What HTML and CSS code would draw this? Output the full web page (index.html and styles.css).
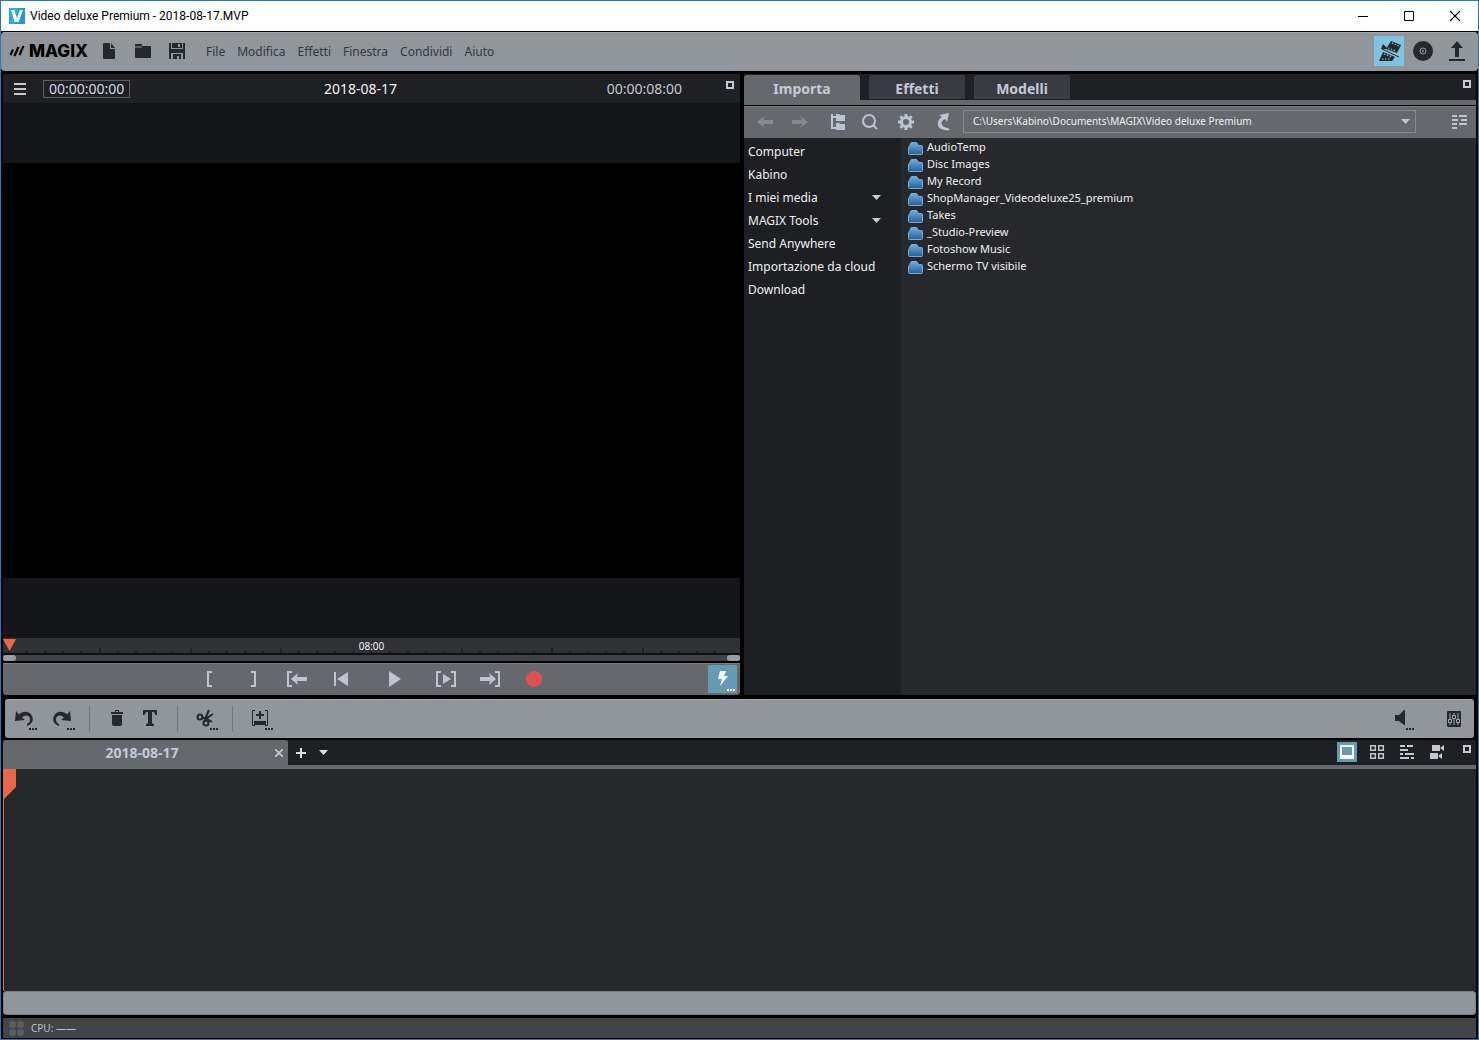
FILE: index.html
```html
<!DOCTYPE html>
<html lang="it">
<head>
<meta charset="utf-8">
<title>Video deluxe Premium - 2018-08-17.MVP</title>
<link rel="stylesheet" href="styles.css">
</head>
<body>
<div class="window">
  <header class="titlebar">
    <svg class="app-icon" width="16" height="16" viewBox="0 0 16 16"><rect width="16" height="16" fill="#27aae8"/><path d="M10 0H16V16H5Z" fill="#1d9add"/><path d="M2 2h3.400l2.400 8 3-8H14L9.500 14H5.500Z" fill="#fff"/></svg>
    <h1 class="title">Video deluxe Premium - 2018-08-17.MVP</h1>
    <div class="window-buttons">
      <button aria-label="Riduci"><svg width="12" height="12" viewBox="0 0 12 12"><path d="M1 6.500h10" stroke="#000"/></svg></button>
      <button aria-label="Ingrandisci"><svg width="12" height="12" viewBox="0 0 12 12"><path d="M1.500 1.500h9v9h-9z" stroke="#000" fill="none"/></svg></button>
      <button aria-label="Chiudi"><svg width="12" height="12" viewBox="0 0 12 12"><path d="M1 1l10 10M11 1L1 11" stroke="#000" stroke-width="1.100"/></svg></button>
    </div>
  </header>

  <div class="menubar">
    <div class="brand">
      <svg width="16" height="12" viewBox="0 0 16 12"><path d="M1.500 10L4 4.500M5.500 11L9.500 2M10.500 10L14.500 1" stroke="#000" stroke-width="2.200" fill="none"/></svg>
      <span class="brand-name">MAGIX</span>
    </div>
    <div class="file-buttons">
      <button aria-label="Nuovo"><svg width="20" height="20" viewBox="0 0 20 20"><path d="M5 2h6v6h5v9q0 1-1 1H5q-1 0-1-1V3q0-1 1-1zM12 2l4 5h-4z" fill="#27282b"/></svg></button>
      <button aria-label="Apri"><svg width="20" height="20" viewBox="0 0 20 20"><path d="M2 4q0-1 1-1h5q1 0 1 1v1h8q1 0 1 1v10q0 1-1 1H3q-1 0-1-1z" fill="#27282b"/><path d="M2 6h7" stroke="#91959c"/></svg></button>
      <button aria-label="Salva"><svg width="20" height="20" viewBox="0 0 20 20"><path d="M2 2h2v6h12V2h2v16h-2v-6H4v6H2zM5 2h10v5H5z" fill="#27282b"/><path d="M11 3h2v3h-2z" fill="#91959c"/><path d="M6 13h8v5h-2v-3h-2v3H6z" fill="#27282b"/></svg></button>
    </div>
    <nav class="menus">
      <button>File</button><button>Modifica</button><button>Effetti</button><button>Finestra</button><button>Condividi</button><button>Aiuto</button>
    </nav>
    <div class="modes">
      <button class="mode-active" aria-label="Modifica video"><svg width="30" height="30" viewBox="0 0 30 30" fill="#27282b"><path d="M17 5l10 4-4 8-11-4z"/><path d="M9 16l12 5-3 4H5z"/><path d="M8 13l17 8" stroke="#27282b" stroke-width="1"/><path d="M9 8l5 5H7z"/><path d="M18 7l7 3M14 12l8 3M10 18l8 3M8 23l9 0" stroke="#7fc3e0" stroke-width="1.200" stroke-dasharray="1.500 1.500"/></svg></button>
      <button aria-label="Masterizza"><svg width="24" height="24" viewBox="0 0 24 24"><circle cx="12" cy="12" r="10" fill="#27282b"/><circle cx="12" cy="12" r="3" fill="none" stroke="#91959c"/><circle cx="12" cy="12" r="1" fill="#91959c"/></svg></button>
      <button aria-label="Esporta"><svg width="24" height="24" viewBox="0 0 24 24"><path d="M12 2l6 7h-4v9h-4V9H6zM4 20h16v2H4z" fill="#27282b"/></svg></button>
    </div>
  </div>

  <main class="workspace">
    <section class="monitor">
      <div class="monitor-head">
        <div class="head-left">
          <button aria-label="Menu"><svg width="14" height="14" viewBox="0 0 14 14"><path d="M1 2h12M1 7h12M1 12h12" stroke="#c4c8d0" stroke-width="2"/></svg></button>
          <span class="timecode">00:00:00:00</span>
        </div>
        <h2 class="project">2018-08-17</h2>
        <div class="head-right">
          <span class="duration">00:00:08:00</span>
          <button class="maximize" aria-label="Ingrandisci monitor"><svg width="8" height="8" viewBox="0 0 8 8"><path d="M1 1h6v6H1z" fill="none" stroke="#c4c8d0" stroke-width="2"/></svg></button>
        </div>
      </div>
      <div class="preview"><div class="video"></div></div>
      <div class="ruler">
        <svg class="ticks" viewBox="0 0 737 15" preserveAspectRatio="none"><path d="M6 13v2M24 13v2M42 13v2M60 13v2M78 13v2M97 10v5M115 13v2M133 13v2M151 13v2M169 13v2M188 10v5M206 13v2M224 13v2M242 13v2M260 13v2M278 10v5M296 13v2M314 13v2M332 13v2M350 13v2M368 13v2M387 13v2M405 13v2M423 13v2M441 13v2M459 10v5M477 13v2M495 13v2M513 13v2M531 13v2M549 10v5M567 13v2M585 13v2M603 13v2M621 13v2M640 10v5M658 13v2M676 13v2M694 13v2M712 13v2" stroke="#101114"/></svg>
        <svg class="marker" width="13" height="12" viewBox="0 0 13 12"><path d="M0 0h13L6.500 12z" fill="#ea6847"/></svg>
        <span>08:00</span>
      </div>
      <div class="scrub"><i></i><i></i></div>
      <div class="transport">
        <div class="transport-keys">
          <button aria-label="Inizio"><svg width="24" height="20" viewBox="0 0 24 20"><path d="M15 3h-4v14h4" class="line"/></svg></button>
          <button aria-label="Fine"><svg width="24" height="20" viewBox="0 0 24 20"><path d="M10 3h4v14h-4" class="line"/></svg></button>
          <button aria-label="Vai a inizio"><svg width="24" height="20" viewBox="0 0 24 20"><path d="M7 3H3v14h4" class="line"/><path d="M6 10l7-6-1 4h10v4H12l1 4z" class="fill"/></svg></button>
          <button aria-label="Indietro"><svg width="24" height="20" viewBox="0 0 24 20"><path d="M5 3h2v14H5zM19 3v14L8 10z" class="fill"/></svg></button>
          <button class="play" aria-label="Riproduci"><svg width="24" height="20" viewBox="0 0 24 20"><path d="M7 2l12 8-12 8z" class="fill"/></svg></button>
          <button aria-label="Riproduci area"><svg width="24" height="20" viewBox="0 0 24 20"><path d="M7 3H3v14h4M17 3h4v14h-4" class="line"/><path d="M9 5l8 5-8 5z" class="fill"/></svg></button>
          <button aria-label="Vai a fine"><svg width="24" height="20" viewBox="0 0 24 20"><path d="M17 3h4v14h-4" class="line"/><path d="M18 10l-7-6 1 4H2v4h10l-1 4z" class="fill"/></svg></button>
          <button aria-label="Registra"><svg width="24" height="20" viewBox="0 0 24 20"><circle cx="12" cy="10" r="8" fill="#df5050"/></svg></button>
        </div>
        <button class="boost" aria-label="Prestazioni"><svg width="29" height="28" viewBox="0 0 29 28" fill="#fff"><path d="M12 6h6l-2 5h4l-8 10 2-7h-4zM19 24h2v2h-2zM22 24h2v2h-2zM25 24h2v2h-2z"/></svg></button>
      </div>
    </section>

    <section class="media">
      <div class="tabs">
        <button class="tab tab-active">Importa</button>
        <button class="tab">Effetti</button>
        <button class="tab">Modelli</button>
        <button class="maximize" aria-label="Ingrandisci media"><svg width="8" height="8" viewBox="0 0 8 8"><path d="M1 1h6v6H1z" fill="none" stroke="#c4c8d0" stroke-width="2"/></svg></button>
      </div>
      <div class="browser-bar">
        <button aria-label="Indietro"><svg width="24" height="24" viewBox="0 0 24 24"><path d="M4 12l8-6-2 4h10v4H10l2 4z" fill="#85888d"/></svg></button>
        <button aria-label="Avanti"><svg width="24" height="24" viewBox="0 0 24 24"><path d="M20 12l-8-6 2 4H4v4h10l-2 4z" fill="#85888d"/></svg></button>
        <button aria-label="Struttura"><svg width="24" height="24" viewBox="0 0 24 24"><path d="M9 4v14h5M9 7h5" class="line"/><path d="M13 4h3l1 1h5v6h-9zM13 13h3l1 1h5v6h-9z" class="fill"/></svg></button>
        <button aria-label="Cerca"><svg width="24" height="24" viewBox="0 0 24 24"><circle cx="11" cy="11" r="6" class="line"/><path d="M15 15l4 4" class="line"/></svg></button>
        <button aria-label="Impostazioni"><svg width="24" height="24" viewBox="0 0 24 24"><circle cx="13" cy="12" r="4.500" fill="none" stroke="#bfc3d0" stroke-width="3"/><path d="M13 4v3M13 17v3M5 12h3M18 12h3M7.300 6.300l2.200 2.200M16.500 15.500l2.200 2.200M7.300 17.700l2.200-2.200M16.500 8.500l2.200-2.200" stroke="#bfc3d0" stroke-width="3"/></svg></button>
        <button aria-label="Aggiorna"><svg width="24" height="24" viewBox="0 0 24 24"><path d="M11 5l10-2-2 9-2-3c-5 2-5 8 3 9l2 2c-14 2-15-9-8-13z" class="fill"/></svg></button>
        <div class="path">
          <select aria-label="Percorso"><option>C:\Users\Kabino\Documents\MAGIX\Video deluxe Premium</option></select>
          <svg class="path-arrow" width="9" height="5" viewBox="0 0 9 5"><path d="M0 0h9L4.500 5z" fill="#bfc3d0"/></svg>
        </div>
        <button class="view" aria-label="Vista"><svg width="24" height="24" viewBox="0 0 24 24"><path d="M4 6h5M11 6h8M4 10h6M13 10h6M4 14h5M11 14h8M4 18h5" class="line"/></svg></button>
      </div>
      <div class="browser">
        <ul class="places">
          <li><a href="#">Computer</a></li>
          <li><a href="#">Kabino</a></li>
          <li><a href="#">I miei media</a><svg width="9" height="5" viewBox="0 0 9 5"><path d="M0 0h9L4.500 5z" fill="#c8cbd2"/></svg></li>
          <li><a href="#">MAGIX Tools</a><svg width="9" height="5" viewBox="0 0 9 5"><path d="M0 0h9L4.500 5z" fill="#c8cbd2"/></svg></li>
          <li><a href="#">Send Anywhere</a></li>
          <li><a href="#">Importazione da cloud</a></li>
          <li><a href="#">Download</a></li>
        </ul>
        <svg width="0" height="0" class="defs"><defs><linearGradient id="blue" x1="0" y1="0" x2="0" y2="1"><stop offset="0" stop-color="#69aeea"/><stop offset="1" stop-color="#275f96"/></linearGradient>
          <symbol id="folder" viewBox="0 0 15 13"><path d="M.500 11.500V5.500q0-1 1-1l1-3q.300-1 1.300-1H8q1 0 1.500 1l1 2h3q1 0 1 1v7q0 1-1 1h-12q-1 0-1-1z" fill="url(#blue)" stroke="#7fa9cc"/></symbol></defs></svg>
        <ul class="files">
          <li><svg width="15" height="13"><use href="#folder"/></svg><a href="#">AudioTemp</a></li>
          <li><svg width="15" height="13"><use href="#folder"/></svg><a href="#">Disc Images</a></li>
          <li><svg width="15" height="13"><use href="#folder"/></svg><a href="#">My Record</a></li>
          <li><svg width="15" height="13"><use href="#folder"/></svg><a href="#">ShopManager_Videodeluxe25_premium</a></li>
          <li><svg width="15" height="13"><use href="#folder"/></svg><a href="#">Takes</a></li>
          <li><svg width="15" height="13"><use href="#folder"/></svg><a href="#">_Studio-Preview</a></li>
          <li><svg width="15" height="13"><use href="#folder"/></svg><a href="#">Fotoshow Music</a></li>
          <li><svg width="15" height="13"><use href="#folder"/></svg><a href="#">Schermo TV visibile</a></li>
        </ul>
      </div>
    </section>
  </main>

  <section class="arranger">
    <div class="edit-bar">
      <div class="group history">
        <button aria-label="Annulla"><svg width="24" height="24" viewBox="0 0 24 24"><path d="M2 4L1 14l10-1-3-2.500C11 7 16 8 16 12.500c0 3-2 4-3 4.500v2c5-1.500 7-6 5-10C15.500 4 9 3.500 5 7.500z"/><path d="M15 21h2v2h-2zM18 21h2v2h-2zM21 21h2v2h-2z"/></svg></button>
        <button aria-label="Ripeti"><svg width="24" height="24" viewBox="0 0 24 24"><path d="M18 4l1 10-10-1 3-2.500C9 7 4 8 4 12.500c0 3 2 4 3 4.500v2C2 17.500 0 13 2 9 4.500 4 11 3.500 15 7.500z"/><path d="M15 21h2v2h-2zM18 21h2v2h-2zM21 21h2v2h-2z"/></svg></button>
      </div>
      <i class="sep"></i>
      <div class="group">
        <button aria-label="Elimina"><svg width="24" height="24" viewBox="0 0 24 24"><path d="M4 5h4V3h4v2h4v2H4zM5 8h10v9q0 2-2 2H7q-2 0-2-2z"/><path d="M9 4.500h2" stroke="#91959c"/></svg></button>
        <button aria-label="Titolo"><svg width="24" height="24" viewBox="0 0 24 24"><path d="M3 3h14v5h-1.500L14 5h-2v11l2 1.500V19H6v-1.500L8 16V5H6L4.500 8H3z"/></svg></button>
      </div>
      <i class="sep"></i>
      <button aria-label="Taglia"><svg width="24" height="24" viewBox="0 0 24 24"><circle cx="5" cy="10" r="2.500" fill="none" stroke="#27282b" stroke-width="2"/><circle cx="11" cy="16" r="2.500" fill="none" stroke="#27282b" stroke-width="2"/><path d="M7 11l5 0 6-4M10 14l1-4 3-7M12 12l5 3" fill="none" stroke="#27282b" stroke-width="2"/><path d="M15 21h2v2h-2zM18 21h2v2h-2zM21 21h2v2h-2z"/></svg></button>
      <i class="sep"></i>
      <button aria-label="Inserisci"><svg width="24" height="24" viewBox="0 0 24 24"><path d="M5 3.500H2.500v15H5M15 3.500h2.500v15H15" fill="none" stroke="#27282b"/><path d="M9 4h2v3h3v2h-3v3H9V9H6V7h3zM4 14h12v4H4zM15 21h2v2h-2zM18 21h2v2h-2zM21 21h2v2h-2z"/></svg></button>
      <div class="audio">
        <button aria-label="Audio"><svg width="24" height="24" viewBox="0 0 24 24"><path d="M4 8h4l5-5h1v15h-1l-5-4H4z"/><path d="M15 21h2v2h-2zM18 21h2v2h-2zM21 21h2v2h-2z"/></svg></button>
        <button aria-label="Mixer"><svg width="14" height="16" viewBox="0 0 14 16"><rect width="14" height="16" rx="1"/><path d="M3 2v6M3 12v2M7 2v2M7 8v6M11 2v6M11 12v2" stroke="#a4a7ad"/><path d="M1.500 8.500h3v3h-3zM5.500 4.500h3v3h-3zM9.500 8.500h3v3h-3z" fill="none" stroke="#a4a7ad"/></svg></button>
      </div>
    </div>
    <div class="sheet-bar">
      <div class="sheet">
        <button class="sheet-name">2018-08-17</button>
        <button class="sheet-close" aria-label="Chiudi scheda"><svg width="8" height="8" viewBox="0 0 8 8"><path d="M0 0l8 8M8 0L0 8" stroke="#c4c8d0" stroke-width="1.600"/></svg></button>
      </div>
      <button aria-label="Nuova scheda"><svg width="10" height="10" viewBox="0 0 10 10"><path d="M5 0v10M0 5h10" stroke="#dcdee4" stroke-width="2"/></svg></button>
      <button aria-label="Elenco schede"><svg width="9" height="5" viewBox="0 0 9 5"><path d="M0 0h9L4.500 5z" fill="#dcdee4"/></svg></button>
      <div class="views">
        <button class="view-active" aria-label="Storyboard"><svg width="20" height="20" viewBox="0 0 20 20"><path d="M3 3h14v14H3zM5 5v8h10V5z" fill="#fff" fill-rule="evenodd"/></svg></button>
        <button aria-label="Panoramica"><svg width="20" height="20" viewBox="0 0 20 20"><path d="M3.700 3.700h4.600v4.600H3.700zM11.700 3.700h4.600v4.600h-4.600zM3.700 11.700h4.600v4.600H3.700zM11.700 11.700h4.600v4.600h-4.600z" fill="none" stroke="#c4c8d0" stroke-width="1.500"/></svg></button>
        <button aria-label="Timeline"><svg width="20" height="20" viewBox="0 0 20 20"><path d="M3 4h5M10 4h6M3 8h8M8 12h9M3 12h3M3 16h9M14 16h3" stroke="#c4c8d0" stroke-width="2"/></svg></button>
        <button aria-label="Multicam"><svg width="20" height="20" viewBox="0 0 20 20"><path d="M5 3h8v6H5zM13 6l4-3v6zM3 11h8v6H3zM11 14l4-3v6z" fill="#c4c8d0"/></svg></button>
        <button class="maximize" aria-label="Ingrandisci progetto"><svg width="8" height="8" viewBox="0 0 8 8"><path d="M1 1h6v6H1z" fill="none" stroke="#c4c8d0" stroke-width="2"/></svg></button>
      </div>
    </div>
    <div class="timeline">
      <svg class="playhead" width="13" height="30" viewBox="0 0 13 30"><path d="M0 0h13v18L1 30H0z" fill="#ea6847"/></svg>
    </div>
    <div class="hscroll"></div>
  </section>

  <footer class="status">
    <svg width="15" height="15" viewBox="0 0 15 15" fill="#5c5d61"><circle cx="3.500" cy="3.500" r="3.500"/><circle cx="11.500" cy="3.500" r="3.500"/><circle cx="3.500" cy="11.500" r="3.500"/><circle cx="11.500" cy="11.500" r="3.500"/></svg>
    <span>CPU: ——</span>
  </footer>
</div>
</body>
</html>
```
FILE: styles.css
```css
* { box-sizing: border-box; }

body {
  margin: 0;
  font-family: "Noto Sans", "Open Sans", sans-serif;
  font-size: 12px;
  color: #f0f0f2;
  background: #000;
}

button {
  display: flex;
  align-items: center;
  justify-content: center;
  padding: 0;
  border: 0;
  background: none;
  color: inherit;
  font: inherit;
}

svg { display: block; flex: none; }
h1, h2 { margin: 0; font-weight: 400; }
ul { margin: 0; padding: 0; list-style: none; }
a { color: inherit; text-decoration: none; }

.line { fill: none; stroke: #bfc3d0; stroke-width: 2; }
.fill { fill: #bfc3d0; }

.window {
  display: flex;
  flex-direction: column;
  height: 100vh;
  min-height: 640px;
  border: 1px solid #2f78b7;
  background: #000;
}

/* Title bar */
.titlebar {
  display: flex;
  align-items: center;
  height: 30px;
  padding-left: 8px;
  background: #fff;
  color: #000;
}
.title { margin-left: 5px; font-size: 12px; font-family: Roboto, sans-serif; }
.window-buttons { display: flex; margin-left: auto; }
.window-buttons button { width: 46px; height: 30px; }

/* Menu bar */
.menubar {
  display: flex;
  align-items: center;
  height: 39px;
  margin-top: 1px;
  padding: 0 9px 2px 8px;
  border-top: 1px solid #a2a5aa;
  border-radius: 4px;
  background: #91959c;
}
.brand { display: flex; align-items: center; gap: 4px; width: 90px; color: #000; }
.brand-name { font: 800 17px/20px Inter, sans-serif; }
.file-buttons { display: flex; gap: 14px; }
.menus { display: flex; gap: 12px; margin-left: 19px; color: #36383c; }
.modes { display: flex; align-items: center; gap: 10px; margin-left: auto; }
.mode-active { margin-right: -3px; background: #7fc3e0; }

/* Upper half */
.workspace {
  display: grid;
  grid-template-columns: 737fr 732fr;
  gap: 4px;
  flex: 621 1 0;
  min-height: 0;
  margin: 3px 2px 0;
}
.monitor, .media { display: flex; flex-direction: column; min-width: 0; min-height: 0; }

.monitor-head {
  display: grid;
  grid-template-columns: 1fr auto 1fr;
  align-items: center;
  height: 29px;
  padding: 0 6px 0 10px;
  background: #1f2024;
  font-size: 14px;
}
.head-left, .head-right { display: flex; align-items: center; }
.head-left { gap: 16px; }
.head-right { justify-content: flex-end; gap: 44px; }
.timecode { padding: 0 5px; border: 1px solid #5b5d62; line-height: 16px; color: #d5d8e0; }
.project { padding-right: 10px; margin-left: -16px; font-size: 14px; }
.duration { color: #c4c8d0; }
.head-right .maximize { margin-bottom: 8px; }

.preview {
  display: flex;
  align-items: center;
  flex: 1;
  min-height: 0;
  overflow: hidden;
  background: #151619;
}
.video { width: 100%; aspect-ratio: 16 / 9; background: #000; }

.ruler {
  position: relative;
  display: flex;
  justify-content: center;
  height: 17px;
  border-bottom: 2px solid #101114;
  background: #303236;
  font-size: 10px;
  line-height: 16px;
}
.ticks { position: absolute; left: 0; top: 0; width: 100%; height: 15px; }
.marker { position: absolute; left: 0; top: 1px; }
.scrub {
  display: flex;
  justify-content: space-between;
  height: 6px;
  margin-bottom: 2px;
  background: #3f4146;
}
.scrub i { width: 13px; border-radius: 3px; background: #9a9da4; }

.transport {
  display: grid;
  grid-template-columns: 1fr auto 1fr;
  align-items: center;
  height: 32px;
  padding-bottom: 1px;
  border-top: 1px solid #7a7d82;
  border-radius: 0 0 3px 3px;
  background: #65686d;
}
.transport-keys { display: flex; grid-column: 2; }
.transport-keys button { width: 44px; height: 30px; }
.transport-keys .play { width: 61px; }
.boost { justify-self: end; margin-right: 3px; background: #649ab4; }

/* Media pool */
.tabs {
  display: flex;
  align-items: flex-start;
  gap: 9px;
  height: 31px;
  padding-top: 1px;
  border-bottom: 5px solid #65686d;
  background: #1f2024;
}
.tab {
  width: 96px;
  height: 24px;
  padding-top: 2px;
  border-radius: 3px 3px 0 0;
  background: #393b42;
  color: #c4c8d8;
  font-size: 14px;
  font-weight: 700;
}
.tab-active { width: 116px; height: 25px; background: #65686d; }
.tabs .maximize { margin: 5px 5px 0 auto; }

.browser-bar {
  display: flex;
  align-items: center;
  gap: 11px;
  height: 32px;
  margin-top: 1px;
  padding: 0 4px 2px 9px;
  border-top: 1px solid #7a7d82;
  background: #65686d;
}
.path { position: relative; flex: 1; }
.path select {
  display: block;
  width: 100%;
  height: 23px;
  padding: 0 24px 2px 9px;
  border: 1px solid #85888d;
  border-radius: 0;
  appearance: none;
  background: #65686d;
  color: #f0f0f2;
  font: 10px/20px "Noto Sans", sans-serif;
}
.path-arrow { position: absolute; right: 6px; top: 9px; }
.view { margin-left: 21px; }

.browser { display: flex; flex: 1; min-height: 0; background: #27282c; }
.defs { position: absolute; }
.places { width: 157px; padding: 2px 0 0 4px; background: #1e1f23; }
.places li { display: flex; align-items: center; justify-content: space-between; height: 23px; padding-right: 20px; }
.files { flex: 1; padding-left: 7px; font-size: 11px; }
.files li { display: flex; align-items: center; gap: 4px; height: 17px; }
.files svg { margin-top: 4px; }

/* Arranger */
.arranger {
  display: flex;
  flex-direction: column;
  flex: 316 1 0;
  min-height: 0;
  margin: 4px 2px 0;
}
.edit-bar {
  display: flex;
  align-items: center;
  height: 39px;
  margin: 0 2px;
  padding: 0 13px 0 9px;
  border-top: 1px solid #a2a5aa;
  border-radius: 3px;
  background: #91959c;
  fill: #27282b;
}
.group { display: flex; gap: 9px; }
.history { gap: 14px; }
.sep { width: 1px; height: 26px; margin: 0 17px 0 13px; background: #74777d; }
.audio { display: flex; align-items: center; gap: 32px; margin-left: auto; }

.sheet-bar {
  display: flex;
  align-items: center;
  height: 29px;
  margin-top: 2px;
  gap: 17px;
  border-bottom: 4px solid #65686d;
  background: #1f2024;
}
.sheet {
  display: flex;
  align-items: center;
  width: 285px;
  height: 25px;
  margin-right: -9px;
  border-radius: 3px 3px 0 0;
  background: #65686d;
}
.sheet-name { flex: 1; padding-left: 6px; font-size: 14px; font-weight: 700; color: #c4c8d8; }
.sheet-close { margin-right: 5px; }
.sheet-bar > button { width: 10px; margin-right: -5px; }
.views { display: flex; align-items: center; gap: 10px; margin-left: auto; padding: 0 5px 2px 0; }
.view-active { background: #649ab4; }
.views .maximize { margin: 0 0 6px 6px; }

.timeline { flex: 1; min-height: 0; border-left: 1px solid #ea6847; background: #27282c; }
.playhead { margin-left: -1px; }
.hscroll { height: 24px; border: 1px solid #7d8086; border-radius: 3px; background: #91959c; }

.status {
  display: flex;
  align-items: center;
  gap: 7px;
  height: 20px;
  margin: 3px 2px 1px;
  padding-left: 6px;
  background: #434448;
  color: #c0c2c6;
  font-size: 10px;
}
```
